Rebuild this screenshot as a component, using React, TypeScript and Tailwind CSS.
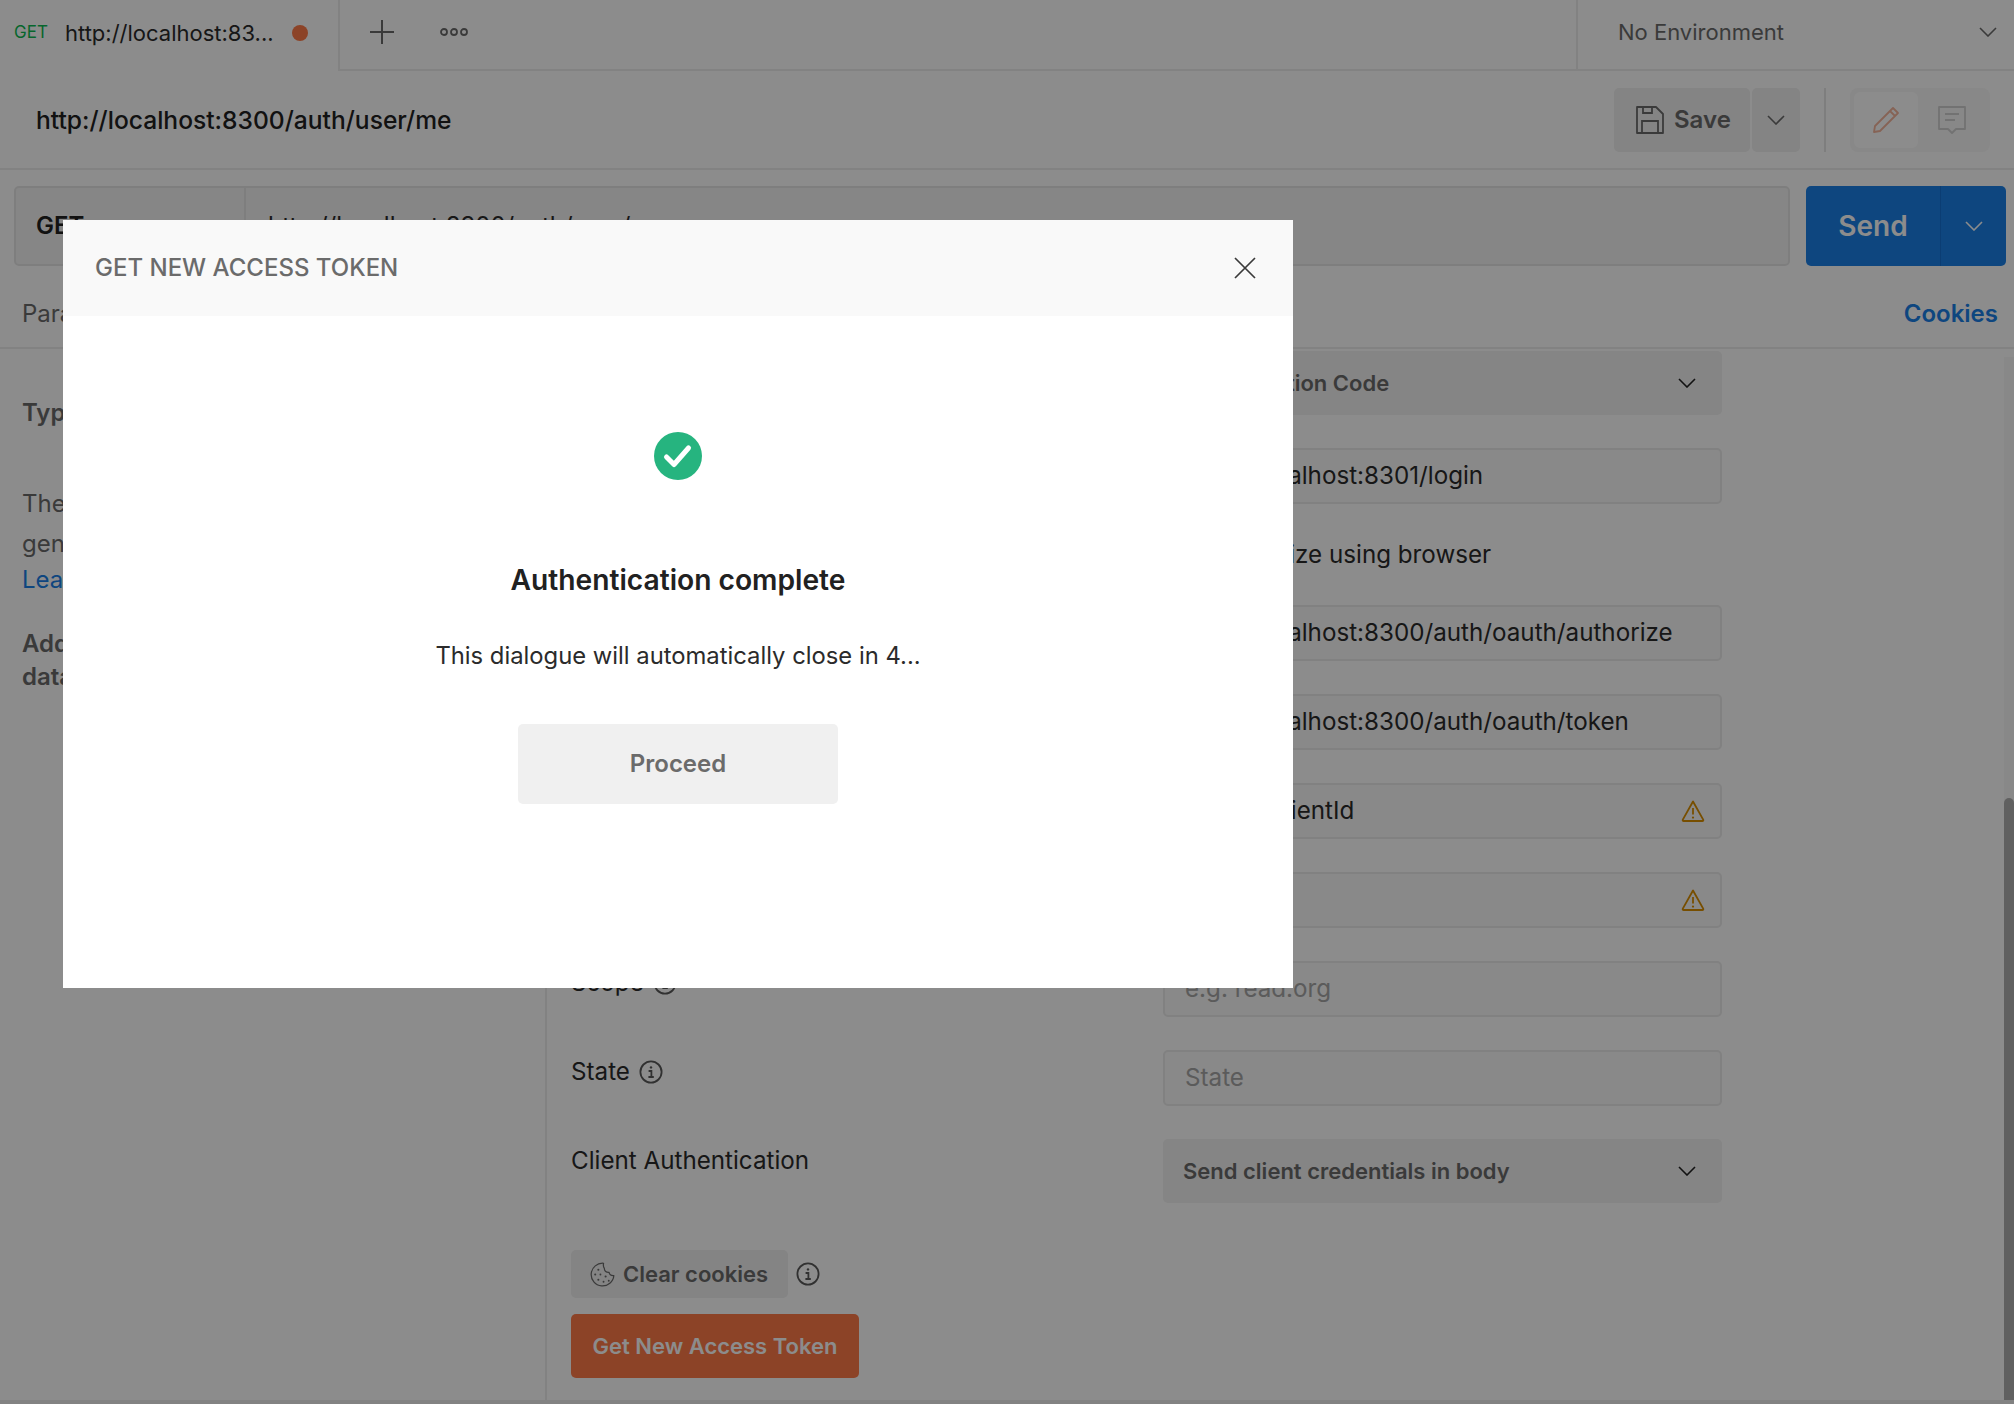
import React from 'react'

function Chevron({ className = 'w-[18px] h-[10px]' }: { className?: string }) {
  return (
    <svg viewBox="0 0 18 10" fill="none" stroke="currentColor" strokeWidth="1.6" className={className}>
      <path d="M1 1l8 8 8-8" />
    </svg>
  )
}

function InfoIcon() {
  return (
    <svg viewBox="0 0 24 24" fill="none" stroke="currentColor" className="w-[24px] h-[24px] shrink-0" strokeWidth="1.8">
      <circle cx="12" cy="12" r="10.6" />
      <path d="M9.6 11h2.8v6M9.4 17h5.4" />
      <circle cx="12" cy="7.4" r="1.2" fill="currentColor" stroke="none" />
    </svg>
  )
}

function WarnIcon() {
  return (
    <svg viewBox="0 0 24 24" fill="none" stroke="currentColor" strokeWidth="1.8" className="w-[24px] h-[24px] text-[#d98e00]">
      <path d="M12 2.5L1.8 20.6c-.4.8 0 1.4.8 1.4h18.8c.8 0 1.2-.6.8-1.4L12 2.5z" strokeLinejoin="round" />
      <path d="M12 9v6.5" />
      <circle cx="12" cy="18.6" r="1.1" fill="currentColor" stroke="none" />
    </svg>
  )
}

function CookieIcon() {
  return (
    <svg viewBox="0 0 24 24" fill="none" stroke="currentColor" strokeWidth="1.2" className="w-[25px] h-[25px] shrink-0">
      <path d="M13 1.2A10.9 10.9 0 1 0 22.9 13c-2.4.2-4.2-.9-4.6-3-2.6.3-4.6-1.3-4.5-3.8-1-1.4-1.2-3.1-.8-5z" strokeLinejoin="round" />
      <g fill="currentColor" stroke="none">
        <circle cx="8" cy="7.5" r="1" />
        <circle cx="5" cy="12" r="1" />
        <circle cx="10" cy="12" r="0.9" />
        <circle cx="15" cy="14" r="1" />
        <circle cx="8" cy="17" r="1" />
        <circle cx="13" cy="19" r="0.9" />
        <circle cx="18" cy="18" r="0.9" />
      </g>
    </svg>
  )
}

function Field({ text, placeholder, warn }: { text?: string; placeholder?: boolean; warn?: boolean }) {
  return (
    <div className="h-[56px] w-[559px] rounded-[5px] border-2 border-[#ebebeb] bg-[#f9f9f9] pl-[20px] pr-[15px] flex items-center justify-between text-[24.2px]">
      <span className={placeholder ? 'text-[#a6a6a6]' : 'text-[#2b2b2b]'}>{text}</span>
      {warn && <WarnIcon />}
    </div>
  )
}

function SelectBox({ text }: { text: string }) {
  return (
    <div className="h-[64px] w-[559px] rounded-[5px] bg-[#f2f2f2] pl-[20px] pr-[26px] flex items-center justify-between">
      <span className="text-[22px] font-semibold text-[#6b6b6b]">{text}</span>
      <Chevron className="w-[18px] h-[10px] text-[#212121]" />
    </div>
  )
}

function FormRow({ label, info, mb, children }: { label: string; info?: boolean; mb: string; children: React.ReactNode }) {
  return (
    <div className={`flex ${mb}`}>
      <div className="w-[592px] flex items-center gap-[9px] text-[24.2px] h-[40px] mt-[2px] text-[#2b2b2b]">
        {label}
        {info && <span className="text-[#5a5a5a]"><InfoIcon /></span>}
      </div>
      {children}
    </div>
  )
}

function AuthModal() {
  return (
    <div className="absolute inset-0 bg-black/45">
      <div className="absolute left-[63px] top-[220px] w-[1230px] h-[768px] bg-white flex flex-col">
        <div className="h-[96px] bg-[#f9f9f9] pl-[32px] pr-[37px] flex items-center justify-between">
          <span className="text-[24px] font-medium text-[#6b6b6b]">GET NEW ACCESS TOKEN</span>
          <svg viewBox="0 0 22 22" fill="none" stroke="#3a3a3a" strokeWidth="1.7" className="w-[22px] h-[22px]">
            <path d="M1 1l20 20M21 1L1 21" />
          </svg>
        </div>
        <div className="flex flex-col items-center pt-[116px]">
          <svg viewBox="0 0 48 48" className="w-[48px] h-[48px]">
            <circle cx="24" cy="24" r="24" fill="#26b47f" />
            <path d="M12.5 25l7.5 7.5L34.5 16" fill="none" stroke="#fff" strokeWidth="5" strokeLinecap="round" strokeLinejoin="round" />
          </svg>
          <div className="mt-[78px] text-[28.2px] leading-[44px] font-semibold text-[#212121]">Authentication complete</div>
          <div className="mt-[32px] text-[23.8px] leading-[44px] text-[#2b2b2b]">This dialogue will automatically close in 4...</div>
          <div className="mt-[46px] w-[320px] h-[80px] rounded-[5px] bg-[#f0f0f0] flex items-center justify-center text-[24px] font-semibold text-[#6b6b6b]">
            Proceed
          </div>
        </div>
      </div>
    </div>
  )
}

export default function App() {
  return (
    <div className="relative w-[2014px] h-[1404px] overflow-hidden bg-white font-['Inter',sans-serif] flex flex-col">
      {/* tab strip */}
      <div className="h-[71px] flex shrink-0">
        <div className="w-[340px] border-r-2 border-[#ededed] pl-[14px] pb-[5px] flex items-center">
          <span className="text-[17px] text-[#0cbb52] w-[51px]">GET</span>
          <span className="text-[22px] text-[#2b2b2b] w-[227px]">http://localhost:83...</span>
          <span className="w-[16px] h-[16px] rounded-full bg-[#ff7a47]" />
        </div>
        <div className="flex-1 border-b-2 border-[#ededed] flex items-center pl-[30px] pb-[5px]">
          <svg viewBox="0 0 24 24" stroke="#6b6b6b" strokeWidth="2" className="w-[24px] h-[24px]">
            <path d="M12 0v24M0 12h24" />
          </svg>
          <svg viewBox="0 0 28 10" fill="none" stroke="#6b6b6b" strokeWidth="1.8" className="w-[28px] h-[10px] ml-[46px]">
            <circle cx="4" cy="5" r="3" />
            <circle cx="14" cy="5" r="3" />
            <circle cx="24" cy="5" r="3" />
          </svg>
        </div>
        <div className="w-[438px] border-l-2 border-b-2 border-[#ededed] pl-[40px] pr-[17px] pb-[5px] flex items-center justify-between">
          <span className="text-[22px] text-[#6b6b6b]">No Environment</span>
          <Chevron className="w-[18px] h-[10px] text-[#6b6b6b]" />
        </div>
      </div>

      {/* request title */}
      <div className="h-[99px] shrink-0 border-b-2 border-[#ededed] pl-[36px] pr-[24px] flex items-center justify-between">
        <span className="pt-[2px] text-[24.6px] font-medium text-[#212121]">http://localhost:8300/auth/user/me</span>
        <div className="flex items-center h-[64px]">
          <div className="w-[136px] h-full rounded-[5px] bg-[#f0f0f0] flex items-center pl-[22px] gap-[10px] text-[#6b6b6b]">
            <svg viewBox="0 0 28 28" fill="none" stroke="#6b6b6b" strokeWidth="1.8" className="w-[28px] h-[28px]">
              <path d="M1 1h19l7 7v19H1z" strokeLinejoin="round" />
              <path d="M7 1v6h9V1M6 27V15h16v12" />
            </svg>
            <span className="text-[24px] font-semibold">Save</span>
          </div>
          <div className="ml-[2px] w-[48px] h-full rounded-[5px] bg-[#f0f0f0] flex items-center justify-center text-[#6b6b6b]">
            <Chevron className="w-[18px] h-[10px]" />
          </div>
          <div className="mx-[24px] w-[2px] h-full bg-[#e6e6e6]" />
          <div className="w-[140px] h-full rounded-[8px] bg-[#f7f7f7] flex items-center p-[4px]">
            <div className="w-[64px] h-[56px] rounded-[6px] bg-white flex items-center justify-center">
              <svg viewBox="0 0 28 28" fill="none" stroke="#f4b49c" strokeWidth="1.8" className="w-[28px] h-[28px]">
                <path d="M21 2l5 5L8 25l-6 1 1-6zM18 5l5 5" strokeLinejoin="round" />
              </svg>
            </div>
            <div className="flex-1 flex items-center justify-center">
              <svg viewBox="0 0 28 28" fill="none" stroke="#d0d0d0" strokeWidth="1.8" className="w-[28px] h-[28px]">
                <path d="M1 1h26v22H18l-4 4-4-4H1zM7 8h14M7 14h10" strokeLinejoin="round" />
              </svg>
            </div>
          </div>
        </div>
      </div>

      {/* url bar */}
      <div className="h-[98px] shrink-0 pl-[14px] pr-[8px] pt-[16px] flex">
        <div className="w-[1776px] h-[80px] rounded-[5px] border-2 border-[#e6e6e6] bg-[#f4f4f4] flex items-center">
          <div className="w-[230px] h-full border-r-2 border-[#e6e6e6] pl-[20px] flex items-center text-[24px] font-semibold text-[#212121]">GET</div>
          <div className="pl-[22px] text-[24px] text-[#2b2b2b]">http://localhost:8300/auth/user/me</div>
        </div>
        <div className="ml-[16px] w-[200px] h-[80px] rounded-[5px] bg-[#1a80e8] flex items-center text-white">
          <div className="w-[135px] h-full border-r border-[#1570d2] flex items-center justify-center text-[28px] font-semibold">Send</div>
          <div className="flex-1 flex items-center justify-center">
            <Chevron className="w-[18px] h-[10px]" />
          </div>
        </div>
      </div>

      {/* sub tabs */}
      <div className="h-[81px] shrink-0 border-b-2 border-[#ededed] pl-[22px] pr-[16px] flex items-center justify-between pt-[12px] text-[24px]">
        <span className="text-[#6b6b6b]">Params</span>
        <span className="font-semibold text-[#1a80e8]">Cookies</span>
      </div>

      {/* auth panel */}
      <div className="flex-1 min-h-0 flex border-b-4 border-[#ededed]">
        <div className="w-[547px] shrink-0 border-r-2 border-[#ededed] pl-[22px] pt-[46px] text-[24px] text-[#6b6b6b]">
          <div className="font-semibold">Type</div>
          <div className="mt-[53px] leading-[40px]">The authorization data will be automatically</div>
          <div className="leading-[40px]">generated when you send the request.</div>
          <div className="leading-[32px] text-[#1a80e8]">Learn more about authorization</div>
          <div className="mt-[31px] font-semibold leading-[33px]">Add authorization<br />data to</div>
        </div>
        <div className="flex-1 pl-[24px] pt-[2px]">
          <FormRow label="Grant Type" mb="mb-[33px]"><SelectBox text="Authorization Code" /></FormRow>
          <FormRow label="Callback URL" info mb="mb-[31px]"><Field text="http://localhost:8301/login" /></FormRow>
          <div className="flex h-[40px] mb-[30px]">
            <div className="w-[592px]" />
            <label className="pl-[17px] flex items-center gap-[12px] text-[24.2px] text-[#2b2b2b]">
              <span className="w-[20px] h-[20px] rounded-[3px] border-2 border-[#a6a6a6]" />
              Authorize using browser
            </label>
          </div>
          <FormRow label="Auth URL" info mb="mb-[33px]"><Field text="http://localhost:8300/auth/oauth/authorize" /></FormRow>
          <FormRow label="Access Token URL" info mb="mb-[33px]"><Field text="http://localhost:8300/auth/oauth/token" /></FormRow>
          <FormRow label="Client ID" info mb="mb-[33px]"><Field text="sampleClientId" warn /></FormRow>
          <FormRow label="Client Secret" info mb="mb-[33px]"><Field warn /></FormRow>
          <FormRow label="Scope" info mb="mb-[33px]"><Field text="e.g. read.org" placeholder /></FormRow>
          <FormRow label="State" info mb="mb-[33px]"><Field text="State" placeholder /></FormRow>
          <FormRow label="Client Authentication" mb="mb-[47px]"><SelectBox text="Send client credentials in body" /></FormRow>
          <div className="flex items-center gap-[8px] text-[#6b6b6b]">
            <div className="w-[217px] h-[48px] rounded-[5px] bg-[#f0f0f0] flex items-center pl-[19px] gap-[8px]">
              <CookieIcon />
              <span className="text-[22px] font-semibold">Clear cookies</span>
            </div>
            <span className="text-[#5a5a5a]"><InfoIcon /></span>
          </div>
          <div className="mt-[16px] w-[288px] h-[64px] rounded-[5px] bg-[#ff7a47] flex items-center justify-center text-[22px] font-semibold text-white">
            Get New Access Token
          </div>
        </div>
        <div className="w-[10px] shrink-0 mt-[8px] bg-[#f7f7f7] flex flex-col">
          <div className="flex-1 mt-[441px] rounded-t-[5px] bg-[#b0b0b0]" />
        </div>
      </div>

      <AuthModal />
    </div>
  )
}
